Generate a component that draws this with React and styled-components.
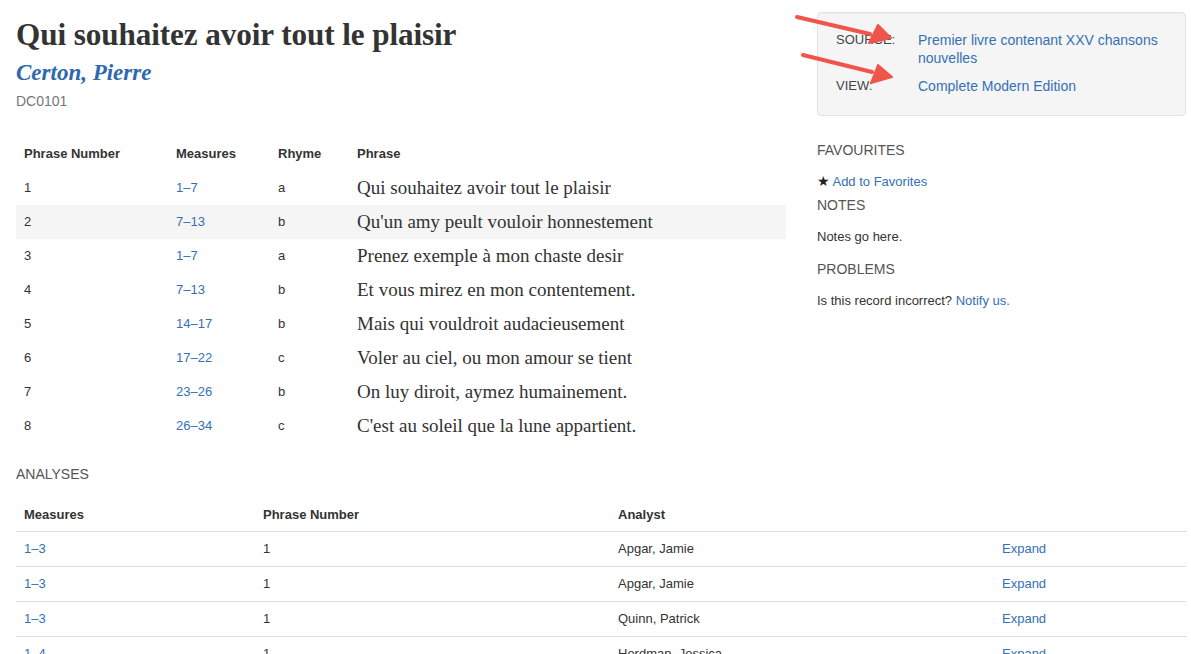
import React from 'react'
import styled, { createGlobalStyle } from 'styled-components'

const phrases = [
  { num: 1, measures: '1–7', rhyme: 'a', text: 'Qui souhaitez avoir tout le plaisir' },
  { num: 2, measures: '7–13', rhyme: 'b', text: "Qu'un amy peult vouloir honnestement" },
  { num: 3, measures: '1–7', rhyme: 'a', text: 'Prenez exemple à mon chaste desir' },
  { num: 4, measures: '7–13', rhyme: 'b', text: 'Et vous mirez en mon contentement.' },
  { num: 5, measures: '14–17', rhyme: 'b', text: 'Mais qui vouldroit audacieusement' },
  { num: 6, measures: '17–22', rhyme: 'c', text: 'Voler au ciel, ou mon amour se tient' },
  { num: 7, measures: '23–26', rhyme: 'b', text: 'On luy diroit, aymez humainement.' },
  { num: 8, measures: '26–34', rhyme: 'c', text: "C'est au soleil que la lune appartient." },
]

const analyses = [
  { measures: '1–3', phrase: 1, analyst: 'Apgar, Jamie' },
  { measures: '1–3', phrase: 1, analyst: 'Apgar, Jamie' },
  { measures: '1–3', phrase: 1, analyst: 'Quinn, Patrick' },
  { measures: '1–4', phrase: 1, analyst: 'Herdman, Jessica' },
]

const App = () => {
  return (
    <Page>
      <GlobalStyle />
      <Layout>
        <Main>
          <Title>Qui souhaitez avoir tout le plaisir</Title>
          <Composer href="#">Certon, Pierre</Composer>
          <RecordId>DC0101</RecordId>

          <PhraseTable>
            <colgroup>
              <col style={{ width: 152 }} />
              <col style={{ width: 102 }} />
              <col style={{ width: 79 }} />
              <col />
            </colgroup>
            <thead>
              <tr>
                <Th>Phrase Number</Th>
                <Th>Measures</Th>
                <Th>Rhyme</Th>
                <Th>Phrase</Th>
              </tr>
            </thead>
            <tbody>
              {phrases.map((p, i) => (
                <PhraseRow key={i} $striped={i === 1}>
                  <Td>{p.num}</Td>
                  <Td><Link href="#">{p.measures}</Link></Td>
                  <Td>{p.rhyme}</Td>
                  <PhraseCell>{p.text}</PhraseCell>
                </PhraseRow>
              ))}
            </tbody>
          </PhraseTable>
        </Main>

        <Sidebar>
          <Well>
            <InfoRow>
              <InfoLabel>Source:</InfoLabel>
              <InfoValue href="#">Premier livre contenant XXV chansons nouvelles</InfoValue>
            </InfoRow>
            <InfoRow>
              <InfoLabel>View:</InfoLabel>
              <InfoValue href="#">Complete Modern Edition</InfoValue>
            </InfoRow>
          </Well>

          <SideHeading $top={24} $after={11}>Favourites</SideHeading>
          <SideText $bottom={3}>
            <Star>★</Star> <Link href="#">Add to Favorites</Link>
          </SideText>
          <SideHeading $top={0} $after={12}>Notes</SideHeading>
          <SideText $bottom={12}>Notes go here.</SideText>
          <SideHeading $top={0} $after={12}>Problems</SideHeading>
          <SideText $bottom={0}>
            Is this record incorrect? <Link href="#">Notify us.</Link>
          </SideText>
        </Sidebar>
      </Layout>

      <SectionHeading>Analyses</SectionHeading>
      <AnalysisTable>
        <colgroup>
          <col style={{ width: 239 }} />
          <col style={{ width: 355 }} />
          <col style={{ width: 384 }} />
          <col />
        </colgroup>
        <thead>
          <tr>
            <ATh>Measures</ATh>
            <ATh>Phrase Number</ATh>
            <ATh>Analyst</ATh>
            <ATh />
          </tr>
        </thead>
        <tbody>
          {analyses.map((a, i) => (
            <tr key={i}>
              <ATd><Link href="#">{a.measures}</Link></ATd>
              <ATd>{a.phrase}</ATd>
              <ATd>{a.analyst}</ATd>
              <ATd><Link href="#">Expand</Link></ATd>
            </tr>
          ))}
        </tbody>
      </AnalysisTable>

      <Arrows width="110" height="90" viewBox="0 0 110 90">
        <line x1="7" y1="17" x2="80" y2="34" stroke="#f0554b" strokeWidth="4" strokeLinecap="round" />
        <polygon points="88,25 101,38 79,43" fill="#f0554b" stroke="#f0554b" strokeWidth="2" strokeLinejoin="round" />
        <line x1="13" y1="55" x2="82" y2="72" stroke="#f0554b" strokeWidth="4" strokeLinecap="round" />
        <polygon points="88,65 102,77 81,83" fill="#f0554b" stroke="#f0554b" strokeWidth="2" strokeLinejoin="round" />
      </Arrows>
    </Page>
  )
}

export default App

// Styled Components
const GlobalStyle = createGlobalStyle`
  html, body {
    margin: 0;
    padding: 0;
    background: #fff;
  }
  body {
    font-family: "Liberation Sans", Arial, sans-serif;
    font-size: 13px;
    line-height: 20px;
    color: #333;
    overflow: hidden;
  }
`

const Page = styled.div`
  position: relative;
  width: 1191px;
  height: 654px;
  overflow: hidden;
  box-sizing: border-box;
  padding: 0 5px 0 16px;
`

const Layout = styled.div`
  display: grid;
  grid-template-columns: 770px 1fr;
  gap: 31px;
  align-items: start;
`

const Main = styled.div`
  display: flex;
  flex-direction: column;
`

const Title = styled.h1`
  margin: 16px 0 0;
  font-family: "Liberation Serif", "Times New Roman", serif;
  font-size: 31.2px;
  line-height: 38px;
  font-weight: 700;
  color: #333;
  letter-spacing: -0.1px;
`

const Composer = styled.a`
  margin-top: 2px;
  font-family: "Liberation Serif", "Times New Roman", serif;
  font-style: italic;
  font-weight: 700;
  font-size: 23px;
  line-height: 34px;
  color: #2f68ae;
  text-decoration: none;
  align-self: flex-start;
`

const RecordId = styled.div`
  margin-top: 1px;
  font-size: 14px;
  line-height: 20px;
  color: #777;
`

const Link = styled.a`
  color: #3570b5;
  text-decoration: none;
`

const PhraseTable = styled.table`
  margin-top: 26px;
  width: 100%;
  border-collapse: collapse;
  table-layout: fixed;
`

const Th = styled.th`
  height: 34px;
  padding: 0 8px;
  text-align: left;
  font-weight: 700;
  font-size: 13px;
  color: #333;
`

const PhraseRow = styled.tr`
  background: ${p => (p.$striped ? '#f5f5f5' : 'transparent')};
`

const Td = styled.td`
  height: 34px;
  padding: 0 8px;
  font-size: 13px;
  color: #333;
`

const PhraseCell = styled.td`
  height: 34px;
  padding: 0 8px;
  font-family: "Liberation Serif", "Times New Roman", serif;
  font-size: 19px;
  color: #333;
  white-space: nowrap;
`

const Sidebar = styled.aside`
  display: flex;
  flex-direction: column;
  padding-top: 12px;
`

const Well = styled.div`
  display: flex;
  flex-direction: column;
  gap: 10px;
  padding: 18px 10px 20px 18px;
  background: #f5f5f5;
  border: 1px solid #e3e3e3;
  border-radius: 4px;
  box-shadow: inset 0 1px 1px rgba(0, 0, 0, 0.03);
`

const InfoRow = styled.div`
  display: grid;
  grid-template-columns: 82px 1fr;
  line-height: 18px;
`

const InfoLabel = styled.span`
  font-size: 13px;
  text-transform: uppercase;
  color: #444;
`

const InfoValue = styled.a`
  font-size: 14px;
  color: #3570b5;
  text-decoration: none;
`

const SideHeading = styled.h4`
  margin: ${p => p.$top}px 0 ${p => p.$after}px;
  font-size: 14px;
  line-height: 20px;
  font-weight: 400;
  text-transform: uppercase;
  color: #555;
`

const SideText = styled.p`
  margin: 0 0 ${p => p.$bottom}px;
  font-size: 13px;
  line-height: 20px;
  color: #333;
`

const Star = styled.span`
  font-family: "DejaVu Sans", sans-serif;
  font-size: 14px;
  color: #222;
`

const SectionHeading = styled.h4`
  margin: 21px 0 14px;
  font-size: 14px;
  line-height: 20px;
  font-weight: 400;
  text-transform: uppercase;
  color: #555;
`

const AnalysisTable = styled.table`
  width: 100%;
  border-collapse: collapse;
  table-layout: fixed;
`

const ATh = styled.th`
  height: 33px;
  padding: 0 8px;
  text-align: left;
  font-weight: 700;
  font-size: 13px;
  color: #333;
  border-bottom: 1px solid #dddddd;
`

const ATd = styled.td`
  height: 34px;
  padding: 0 8px;
  font-size: 13px;
  color: #333;
  border-top: 1px solid #dddddd;
`

const Arrows = styled.svg`
  position: absolute;
  left: 790px;
  top: 0;
  pointer-events: none;
`
